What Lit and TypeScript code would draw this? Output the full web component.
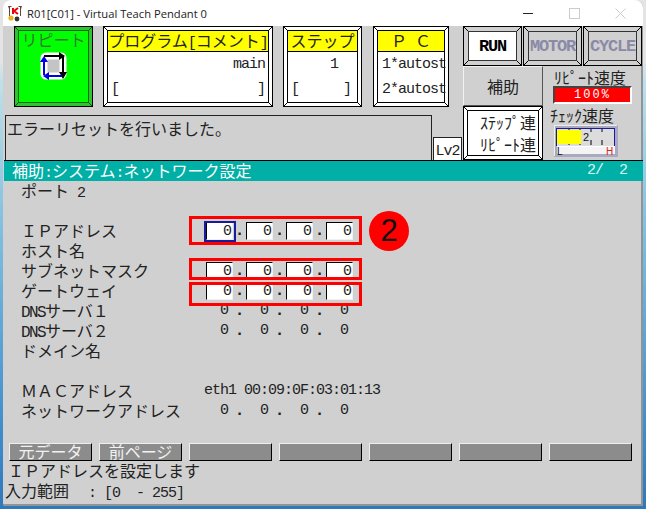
import { LitElement, html, css, svg } from "lit";
import { customElement } from "lit/decorators.js";

type Row = { label: unknown; value?: "field" | "plain" | "mac"; focus?: boolean };
const m = (s: string) => html`<span class="m">${s}</span>`;
const tall = (s: string) => html`<span class="m tall">${s}</span>`;

const rows: Row[] = [
  { label: html`ポート${m(" 2")}` },
  { label: "" },
  { label: "\uFF29\uFF30アドレス", value: "field", focus: true },
  { label: "ホスト名" },
  { label: "サブネットマスク", value: "field" },
  { label: "ゲートウェイ", value: "field" },
  { label: html`${tall("DNS")}サーバ\uFF11`, value: "plain" },
  { label: html`${tall("DNS")}サーバ\uFF12`, value: "plain" },
  { label: "ドメイン名" },
  { label: "" },
  { label: "\uFF2D\uFF21\uFF23アドレス", value: "mac" },
  { label: "ネットワークアドレス", value: "plain" },
];

@customElement("app-root")
export class AppRoot extends LitElement {
  static styles = css`
    :host { display: block; width: 646px; height: 509px; overflow: hidden; background: linear-gradient(#e4e4e4 0, #e4e4e4 12%, #bfe0e8 16%, #7fbfe0 45%, #3f8ccb 85%, #2f78bb 100%); font-family: "Noto Sans CJK JP", monospace; color: #222; }
    * { box-sizing: border-box; }
    .m { font-family: "Liberation Mono", monospace; font-size: 15px; letter-spacing: -1px; white-space: pre; }
    .m.tall { font-size: 16px; letter-spacing: -1.6px; }
    .win { width: 640px; height: 506px; margin-left: 3px; background: #d0d0d0; border-radius: 8px 8px 0 3px; overflow: hidden; display: flex; flex-direction: column; box-shadow: inset -2px -2px 0 #8f9499; position: relative; }
    .title { height: 26px; flex: none; background: #fff; display: flex; align-items: center; padding-left: 3px; font: 11.2px "Open Sans", sans-serif; color: #222; gap: 3px; }
    .title .name { flex: 1; }
    .ctl { width: 46px; height: 26px; margin-left: -3px; display: flex; align-items: center; justify-content: center; flex: none; }
    .deck { display: grid; grid-template-columns: 460px 180px; height: 134px; flex: none; }
    .left { display: flex; flex-direction: column; }
    .panels { display: grid; grid-template-columns: 79px 170px 79px 77px; column-gap: 10px; padding-left: 11px; height: 80px; }
    .panels > :nth-child(4) { margin-left: 1px; }
    .bev { --c: #000; border: 1px solid #000; position: relative; padding: 3px; background-color: #fff; background-image: linear-gradient(45deg, transparent 44%, var(--c) 44% 56%, transparent 56%), linear-gradient(135deg, transparent 44%, var(--c) 44% 56%, transparent 56%), linear-gradient(135deg, transparent 44%, var(--c) 44% 56%, transparent 56%), linear-gradient(45deg, transparent 44%, var(--c) 44% 56%, transparent 56%); background-size: 4px 4px; background-repeat: no-repeat; background-position: top left, top right, bottom left, bottom right; }
    .in { height: 100%; border: 1px solid #000; background: #fff; display: flex; flex-direction: column; }
    .hd { background: #ff0; height: 21px; flex: none; font-size: 16px; line-height: 19px; text-align: center; border-bottom: 1px solid #000; white-space: nowrap; }
    .ln { height: 25px; font-size: 16px; line-height: 25px; padding: 0 3px; display: flex; justify-content: space-between; white-space: pre; }
    .ln.r { justify-content: flex-end; }
    .ln.pc { padding: 0 4px; }
    .ln.st { padding-right: 6px; }
    .green { background-color: #2fc42f; --c: #0a5a0a; }
    .green .in { background: #0f0; border-color: #0b6b0b; align-items: center; font-size: 16px; line-height: 17px; color: #357a30; }
    .green svg { margin-top: 4px; }
    .msgrow { display: grid; grid-template-columns: 427px 29px; column-gap: 1px; padding-left: 2px; height: 54px; }
    .msg { margin-top: 9px; border: 1px solid #222; font-size: 16px; line-height: 24px; padding-left: 1px; white-space: nowrap; }
    .lv { margin-top: 31px; border: 1px solid #222; background: #fff; font-size: 16px; line-height: 21px; text-align: center; }
    .right { display: grid; grid-template-columns: 80px 100px; grid-template-rows: 40px 40px 54px; }
    .lamps { grid-column: 1 / span 2; display: grid; grid-template-columns: repeat(3, 60px); }
    .lamp { background-color: #d0d0d0; padding: 4px; height: 40px; margin-right: 1px; }
    .lamp .in { background: #d0d0d0; border-color: #333; align-items: center; justify-content: center; font: bold 17px "Liberation Mono", monospace; letter-spacing: -1.2px; color: #8a8aa6; }
    .lamp .in.on { background: #fff; color: #000; }
    .hojo { background: #d0d0d0; border: 1px solid; border-color: #f2f2f2 #555 #555 #f2f2f2; display: flex; align-items: center; justify-content: center; font-size: 16px; }
    .mode { grid-column: 1; grid-row: 3; }
    .mode .in { align-items: flex-end; justify-content: space-around; font-size: 16px; line-height: 20px; padding-right: 2px; }
    .speed { grid-column: 2; grid-row: 2 / span 2; padding: 3px 0 0 11px; font-size: 16px; line-height: 17px; display: flex; flex-direction: column; align-items: flex-start; white-space: nowrap; }
    .speed .t2 { margin: 3px 0 1px -4px; }
    .bar { margin-left: -1px; width: 79px; height: 18px; border: 2px solid; border-color: #444 #fff #fff #444; background: #f00; color: #fff; font: 12px/14px "Liberation Mono", monospace; text-align: center; letter-spacing: 2px; }
    .band { height: 21px; flex: none; border-top: 1px solid #000; background: #00b0a6; color: #fff; font-size: 16px; line-height: 19px; padding: 0 16px 0 8px; display: flex; justify-content: space-between; white-space: nowrap; margin-left: 1px; }
    .band .pg { color: #d8f4f2; }
    .body { padding-left: 17px; position: relative; flex: none; height: 262px; }
    .row { height: 20px; display: grid; grid-template-columns: 186px 1fr; font-size: 16px; line-height: 18px; white-space: pre; }
    .lab { margin-left: 1px; }
    .val { display: flex; align-items: flex-start; font-size: 16px; line-height: 18px; margin-top: 1px; }
    .val.mac { margin-left: -2px; }
    .f { width: 27px; height: 18px; text-align: right; padding-right: 1px; line-height: 17px; position: relative; }
    .f.edit { background: #fff; border: 1px solid; border-color: #000 #f0f0f0 #f0f0f0 #000; }
    .f.plain { padding-right: 5px; }
    .f.focus::after { content: ""; position: absolute; left: -3px; top: -2px; right: -4px; bottom: -3px; border: 2px solid #1a1a9c; }
    .dot { width: 13px; text-align: center; font-family: "Liberation Mono", monospace; font-weight: bold; }
    .box { position: absolute; left: 186px; width: 173px; border: 3px solid #f00; }
    .b1 { top: 35px; height: 29px; }
    .b2 { top: 77px; height: 22px; }
    .b3 { top: 101px; height: 24px; }
    .badge { position: absolute; left: 366px; top: 30px; width: 40px; height: 40px; border-radius: 50%; background: #f00; color: #111; font: 31px/40px "Liberation Sans", sans-serif; text-align: center; }
    .keys { display: grid; grid-template-columns: repeat(7, 83px); column-gap: 7px; padding-left: 6px; height: 18px; flex: none; }
    .k { background: #8c8c8c; border: 1px solid; border-color: #eee #000 #000 #eee; color: #f2f2f2; font-size: 16px; line-height: 15px; text-align: center; white-space: nowrap; }
    .foot { font-size: 16px; line-height: 19px; padding-left: 2px; }
    .foot > div { height: 20px; white-space: nowrap; }
    .foot > div:first-child { padding-left: 3px; }
    .range { margin-left: 3px; }
  `;

  private meter() {
    const ticks = [15, 26, 37, 48].map((x) => svg`<path d="M${x} 4v3M${x} 15v5" stroke="#000"/>`);
    return html`<svg width="64" height="32" viewBox="0 0 64 32">
      <rect width="64" height="32" fill="#a9a9c2"/><path d="M0 .5H63M.5 0V31" stroke="#eee" fill="none"/>
      <rect x="3" y="3" width="58" height="26" fill="#dcdcdc"/>
      <rect x="3" y="21" width="58" height="8" fill="#f4f4f4"/>
      ${ticks}
      <rect x="3" y="5" width="24" height="14" fill="#ff0"/>
      <path d="M2.5 3V21M60.5 3V21M2 3.5H61" stroke="#1a1a9c" fill="none"/>
      <path d="M3 21.5H61" stroke="#fff"/>
      <text x="29" y="16" font-family="Liberation Sans" font-size="11" fill="#111">2</text>
      <text x="3" y="30" font-family="Liberation Sans" font-size="10" fill="#111">L</text>
      <text x="52" y="30" font-family="Liberation Sans" font-size="10" fill="#d22">H</text>
    </svg>`;
  }

  private value(r: Row) {
    if (!r.value) return html`<span></span>`;
    if (r.value === "mac") return html`<div class="val mac">${m("eth1 00:09:0F:03:01:13")}</div>`;
    return html`<div class="val">
      ${[0, 1, 2, 3].map((i) => html`<div class="f m ${r.value === "field" ? "edit" : "plain"} ${r.focus && i === 0 ? "focus" : ""}">0</div>${i < 3 ? html`<div class="dot">.</div>` : ""}`)}
    </div>`;
  }

  render() {
    return html`<div class="win">
      <div class="title">
        <svg width="18" height="18" viewBox="0 0 18 18">
          <path d="M2 2h3l1 1h6l1-1h3l-1 3v7H3V5z" fill="#5a4a3a"/>
          <rect x="4" y="3" width="10" height="9" fill="#fff"/>
          <path d="M7 4v6M12 4 8 7l4 3" stroke="#e00" stroke-width="2" fill="none"/>
          <circle cx="5" cy="14" r="2.6" fill="#e6b422"/><circle cx="11" cy="15" r="2.4" fill="#333"/>
        </svg>
        <span class="name">R01[C01] - Virtual Teach Pendant 0</span>
        <div class="ctl"><svg width="10" height="10"><path d="M0 5.5H10" stroke="#222"/></svg></div>
        <div class="ctl"><svg width="11" height="11"><rect x=".5" y=".5" width="10" height="10" fill="none" stroke="#ccc"/></svg></div>
        <div class="ctl"><svg width="11" height="11"><path d="M.5 .5l10 10M10.5 .5l-10 10" stroke="#ccc"/></svg></div>
      </div>

      <div class="deck">
        <div class="left">
          <div class="panels">
            <div class="bev green"><div class="in">リピート
              <svg width="30" height="28" viewBox="0 0 30 28">
                <rect x="5" y="4" width="19" height="20" rx="2" fill="#c4c4c4" stroke="#fff" stroke-width="7"/>
                <path d="M5 4H21M24 4V21" stroke="#000" stroke-width="2" fill="none"/>
                <path d="M20 0l6 4-6 4zM20 20h8l-4 7z" fill="#000"/>
                <path d="M5 23V9M23 24H9" stroke="#0000e0" stroke-width="2" fill="none"/>
                <path d="M1 10l4-6 4 6zM10 20v8l-6-4z" fill="#0000e0"/>
              </svg>
            </div></div>
            <div class="bev"><div class="in">
              <div class="hd">プログラム${m("[")}コメント${m("]")}</div>
              <div class="ln r">${m("main")}</div>
              <div class="ln">${m("[")}${m("]")}</div>
            </div></div>
            <div class="bev"><div class="in">
              <div class="hd">ステップ</div>
              <div class="ln r">${m("1  ")}</div>
              <div class="ln st">${m("[")}${m("]")}</div>
            </div></div>
            <div class="bev"><div class="in">
              <div class="hd">\uFF30${m(" ")}\uFF23</div>
              <div class="ln pc">${m("1*autost")}</div>
              <div class="ln pc">${m("2*autost")}</div>
            </div></div>
          </div>
          <div class="msgrow">
            <div class="msg">エラーリセットを行いました。</div>
            <div class="lv">${m("Lv2")}</div>
          </div>
        </div>
        <div class="right">
          <div class="lamps">
            <div class="bev lamp"><div class="in on">RUN</div></div>
            <div class="bev lamp"><div class="in">MOTOR</div></div>
            <div class="bev lamp"><div class="in">CYCLE</div></div>
          </div>
          <div class="hojo">補助</div>
          <div class="speed">
            <div>ﾘﾋﾟｰﾄ速度</div>
            <div class="bar">100%</div>
            <div class="t2">ﾁｪｯｸ速度</div>
            ${this.meter()}
          </div>
          <div class="bev mode"><div class="in"><div>ｽﾃｯﾌﾟ連</div><div>ﾘﾋﾟｰﾄ連</div></div></div>
        </div>
      </div>

      <div class="band"><span>補助${m(":")}システム${m(":")}ネットワーク設定</span><span class="m pg">2/  2</span></div>

      <div class="body">
        ${rows.map((r) => html`<div class="row"><div class="lab">${r.label}</div>${this.value(r)}</div>`)}
        <div class="box b1"></div><div class="box b2"></div><div class="box b3"></div>
        <div class="badge">2</div>
      </div>

      <div class="keys">
        <div class="k">元データ</div><div class="k">前ページ</div>
        <div class="k"></div><div class="k"></div><div class="k"></div><div class="k"></div><div class="k"></div>
      </div>
      <div class="foot">
        <div>\uFF29\uFF30アドレスを設定します</div>
        <div>入力範囲<span class="m range">  : [0  - 255]</span></div>
      </div>
    </div>`;
  }
}
